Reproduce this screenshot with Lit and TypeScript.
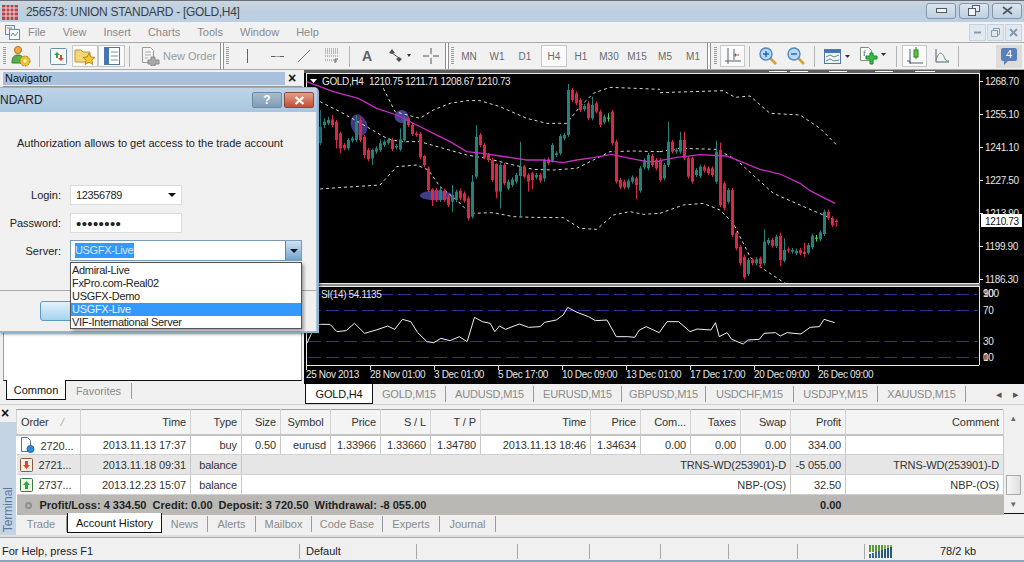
import { LitElement, css, html, svg } from 'lit';
import { customElement } from 'lit/decorators.js';

type Pt = [number, number];
// o, c, high, low - y values sampled from the 3x crop of the chart
type Candle = [number, number, number?, number?];

const sx = (list: Pt[], ox: number) => list.map(([x, y]) => `${ox + x / 3},${70 + y / 3}`).join(' ');

const candles: Candle[] = [
	[220, 170, 120], [165, 155, 145, 175], [160, 150, 140], [148, 165, 135], [155, 210, 150, 235], [190, 235, 185, 250],
	[225, 235], [235, 210, 205], [212, 205], [210, 155, 135], [150, 210, 140], [200, 255, 195, 265],
	[240, 268], [265, 240, 235, 285], [245, 235], [240, 220, 208], [225, 215], [218, 210],
	[210, 238], [232, 228], [238, 208, 175], [210, 150, 140], [145, 165], [165, 192],
	[190, 195], [192, 262], [258, 285, 255, 292], [295, 360], [358, 390, 355, 408], [360, 390],
	[390, 360], [362, 390], [380, 405], [395, 375, 345, 425], [390, 365], [362, 385],
	[370, 392], [385, 445], [440, 335, 315], [320, 200, 165], [195, 225], [225, 262],
	[255, 270], [270, 330], [282, 365, 280, 385], [365, 285, 280, 415], [285, 340], [355, 335],
	[345, 328], [335, 315], [318, 290, 215, 440], [290, 320], [315, 335, 310, 365], [310, 330, 305, 358],
	[322, 315], [315, 332], [325, 270, 265, 335], [268, 280], [272, 225], [255, 250],
	[250, 198], [205, 195], [195, 60, 42], [60, 90], [70, 100], [90, 120],
	[118, 108], [100, 145], [145, 105, 80], [100, 125], [125, 165], [157, 140],
	[145, 143, 130, 155], [125, 220, 120], [215, 335], [330, 352], [335, 352], [352, 332],
	[335, 322], [325, 345, 320, 388], [362, 295], [292, 270], [295, 255], [258, 285],
	[270, 295], [270, 330], [325, 285], [285, 215, 155], [215, 245], [245, 240],
	[245, 210, 185], [210, 265, 185], [265, 320], [265, 335], [315, 300], [318, 290],
	[290, 302], [295, 310], [295, 315], [335, 245, 212], [240, 405, 218], [340, 415],
	[395, 360], [360, 495], [490, 535], [530, 580], [560, 622], [612, 570],
	[570, 580], [580, 568], [565, 582, 560, 595], [580, 515, 478], [520, 510], [510, 527],
	[528, 500], [498, 570, 488, 588], [572, 540, 505], [538, 542], [545, 540], [550, 542],
	[540, 550], [545, 552, 518, 562], [548, 525], [532, 497], [506, 503, 495, 515], [508, 487],
	[492, 425], [425, 445], [445, 465], [452, 456, 448, 470],
];
const smallGreen = new Set([72, 124]);

const maLeft: Pt[] = [[20, 35], [100, 65], [175, 85], [230, 115], [290, 135], [320, 150], [400, 190], [450, 215], [500, 245], [550, 250], [600, 258], [680, 270], [730, 270], [790, 278], [830, 270], [880, 263], [935, 253], [990, 265], [1040, 275], [1080, 274]];
const maRight: Pt[] = [[0, 272], [50, 262], [120, 254], [200, 258], [300, 298], [360, 312], [420, 340], [450, 362], [525, 400]];
const bands: [Pt[], number][] = [
	[[[250, 55], [285, 125], [360, 145], [400, 120], [450, 100], [500, 92], [540, 92], [600, 110], [680, 145], [740, 160], [800, 160], [840, 110], [880, 70], [930, 52], [1080, 58]], 300],
	[[[60, 95], [120, 125], [200, 170], [260, 205], [300, 215], [360, 215], [430, 235], [500, 255], [560, 265], [640, 285], [700, 298], [760, 300], [830, 295], [880, 270], [930, 245], [1000, 243], [1080, 245]], 300],
	[[[60, 357], [130, 352], [240, 345], [290, 290], [350, 285], [385, 300], [420, 350], [470, 390], [510, 430], [580, 428], [640, 440], [700, 442], [790, 443], [840, 475], [890, 478], [940, 435], [990, 425], [1030, 433], [1080, 430]], 300],
	[[[0, 68], [190, 62], [225, 82], [270, 78], [330, 130], [420, 135], [480, 175], [530, 225]], 660],
	[[[0, 245], [60, 235], [170, 238], [230, 270], [290, 325], [340, 370], [420, 405], [490, 435], [525, 450]], 660],
	[[[0, 430], [70, 405], [130, 400], [180, 420], [220, 460], [270, 560], [300, 590], [375, 640]], 660],
];
const rsi: Pt[] = [[15, 190], [25, 160], [40, 133], [65, 133], [80, 155], [100, 152], [118, 130], [140, 160], [165, 150], [190, 138], [205, 148], [222, 118], [240, 125], [255, 158], [275, 185], [290, 188], [305, 175], [325, 182], [345, 170], [362, 185], [378, 112], [395, 125], [412, 130], [422, 155], [432, 138], [445, 148], [475, 132], [495, 142], [520, 140], [530, 127], [555, 120], [570, 105], [580, 82], [600, 97], [625, 110], [640, 122], [665, 120], [685, 170], [710, 170], [725, 172], [735, 150], [750, 140], [778, 158], [795, 125], [820, 125], [845, 155], [860, 147], [890, 150], [900, 128], [908, 170], [925, 158], [935, 178], [960, 192], [970, 180], [995, 178], [1005, 160], [1030, 158], [1040, 168], [1055, 158], [1085, 162], [1105, 142], [1125, 140], [1135, 118], [1158, 128]];

const priceLabels: [string, number][] = [['1268.70', 81], ['1255.10', 114], ['1241.10', 147], ['1227.50', 180], ['1213.90', 213], ['1199.90', 246], ['1186.30', 279]];
const dateLabels = ['25 Nov 2013', '28 Nov 01:00', '3 Dec 01:00', '5 Dec 17:00', '10 Dec 09:00', '13 Dec 01:00', '17 Dec 17:00', '20 Dec 09:00', '26 Dec 09:00'];

const icons = {
	logo: html`<svg width="16" height="15" viewBox="0 0 16 15"><rect width="16" height="15" fill="#b8434a"/><path d="M0 3h16M0 7h16M0 11h16M4 0v15M8 0v15M12 0v15" stroke="#e8d8d8" stroke-width="1"/></svg>`,
	menu: html`<svg width="15" height="15" viewBox="0 0 15 15"><rect x="0.5" y="0.5" width="9" height="9" fill="#e8f2fa" stroke="#5f8fb8"/><rect x="4.5" y="4.5" width="10" height="10" fill="#fff" stroke="#5f8fb8"/><path d="M6 11l2-3 2 3 3-4" fill="none" stroke="#4f9f8f"/><path d="M2 3h5" stroke="#5f8fb8"/></svg>`,
	people: html`<svg width="20" height="22" viewBox="0 0 20 22"><circle cx="7" cy="5" r="3.6" fill="#f0a848" stroke="#b87820"/><path d="M1 18c0-6 2-8 6-8s6 2 6 8z" fill="#58b048" stroke="#2f7f2f"/><circle cx="14" cy="16" r="5" fill="#e8c030" stroke="#a88010" stroke-dasharray="2 1"/><circle cx="14" cy="16" r="1.8" fill="#fff4c0"/></svg>`,
	market: html`<svg width="17" height="17" viewBox="0 0 17 17"><rect x="0.5" y="0.5" width="16" height="16" rx="1" fill="#f4f8fb" stroke="#6f8fa8"/><path d="M7 4l-3 3h2v3h2V7h2z" fill="#3aa03a"/><path d="M10 13l3-3h-2V7H9v3H7z" fill="#d84a2a" transform="translate(1 0)"/></svg>`,
	folder: html`<svg width="22" height="20" viewBox="0 0 22 20"><path d="M1 4h6l2 2h7v10H1z" fill="#f4d878" stroke="#b89838"/><path d="M15 7l1.8 4 4.2.4-3.2 2.8 1 4.2-3.8-2.2-3.8 2.2 1-4.2L9 11.4l4.2-.4z" fill="#f4c838" stroke="#b88818"/></svg>`,
	nav: html`<svg width="16" height="18" viewBox="0 0 16 18"><rect x="0.5" y="0.5" width="15" height="17" fill="#fff" stroke="#4f78a8"/><rect x="1" y="1" width="4" height="16" fill="#3f78b8"/><path d="M7 5h7M7 9h7M7 13h7" stroke="#7f8f9f"/></svg>`,
	order: html`<svg width="20" height="20" viewBox="0 0 20 20"><path d="M2.5 1.5h8l3 3v12h-11z" fill="#f4f4f4" stroke="#9a9a9a"/><path d="M5 6h6M5 9h6M5 12h3" stroke="#a8a8a8"/><path d="M11 11h4v3h4v4h-4v2h-4v-2H8v-4h3z" fill="#a8a8a8" stroke="#8a8a8a"/></svg>`,
	vline: html`<svg width="3" height="14" viewBox="0 0 3 14"><path d="M1.5 0v14" stroke="#606060"/></svg>`,
	hline: html`<svg width="13" height="3" viewBox="0 0 13 3"><path d="M0 1.5h4M9 1.5h4" stroke="#606060"/><path d="M4 1.5h5" stroke="#a0a0a0"/></svg>`,
	trend: html`<svg width="14" height="14" viewBox="0 0 14 14"><path d="M1 13L13 1" stroke="#707070"/></svg>`,
	fibo: html`<svg width="15" height="16" viewBox="0 0 15 16"><path d="M1 1h13M1 3h13M1 5h13M1 8h13M1 12h9" stroke="#808080" stroke-dasharray="1 1"/><path d="M11 15v-4h3M11 13h2" stroke="#606060" fill="none"/></svg>`,
	arrows: html`<svg width="24" height="14" viewBox="0 0 24 14"><path d="M5 0l3 4-3 1-3-1zM12 8l3 2-3 3-3-3z" fill="#505050"/><path d="M5 4l7 5" stroke="#505050"/><path d="M20 5h4l-2 3z" fill="#303030"/></svg>`,
	cross: html`<svg width="16" height="16" viewBox="0 0 16 16"><path d="M8 0v6M8 10v6M0 8h6M10 8h6" stroke="#555"/></svg>`,
	chart: html`<svg width="16" height="16" viewBox="0 0 16 16"><path d="M3 0v13h13M0 13h3M3 13v3M9 1v11" stroke="#506070" fill="none"/><path d="M11 5l-2 2 2 2z" fill="#c84030"/><path d="M10 7h4" stroke="#c84030"/></svg>`,
	zoomIn: html`<svg width="18" height="18" viewBox="0 0 18 18"><path d="M10 10l7 7" stroke="#d8a030" stroke-width="2.5"/><circle cx="7" cy="7" r="6" fill="#b8d8f4" stroke="#4f88c0" stroke-width="1.4"/><path d="M4 7h6M7 4v6" stroke="#2860b0" stroke-width="1.4"/></svg>`,
	zoomOut: html`<svg width="18" height="18" viewBox="0 0 18 18"><path d="M10 10l7 7" stroke="#d8a030" stroke-width="2.5"/><circle cx="7" cy="7" r="6" fill="#b8d8f4" stroke="#4f88c0" stroke-width="1.4"/><path d="M4 7h6" stroke="#2860b0" stroke-width="1.4"/></svg>`,
	template: html`<svg width="26" height="15" viewBox="0 0 26 15"><rect x="0.5" y="0.5" width="16" height="14" fill="#f0f6fb" stroke="#4f78a8"/><rect x="1" y="1" width="15" height="3" fill="#3f78b8"/><path d="M2 8l4-2 4 2 5-2M2 12l4-2 4 2 5-1" stroke="#5f9080" fill="none"/><path d="M21 6h5l-2.500 3z" fill="#303030"/></svg>`,
	add: html`<svg width="26" height="18" viewBox="0 0 26 18"><path d="M0.500 0.500h8l3 3v10h-11z" fill="#fbfbf4" stroke="#7f8f7f"/><text x="3" y="9" font-size="8" font-family="Liberation Serif, serif" fill="#404040">f</text><path d="M8 8h4v-3h3v3h4v3h-4v5h-3v-5H8z" fill="#38c048" stroke="#188828" transform="translate(-2 1)"/><path d="M21 6h5l-2.500 3z" fill="#303030"/></svg>`,
	candle: html`<svg width="16" height="18" viewBox="0 0 16 18"><path d="M3 2v14h13M0 14h3M3 14v3" stroke="#506070" fill="none"/><path d="M9 0v12" stroke="#2f7f2f"/><rect x="7" y="3" width="4" height="7" fill="#58c838" stroke="#2f7f2f"/></svg>`,
	indicator: html`<svg width="14" height="14" viewBox="0 0 14 14"><path d="M1 0v13h13" stroke="#506070" fill="none"/><path d="M1 11c3-9 6-9 9-1 1 2 2 2 4 2" stroke="#5f9060" fill="none"/></svg>`,
	docBall: html`<svg width="15" height="16" viewBox="0 0 15 16"><path d="M1.500 0.500h6l3 3v11h-9z" fill="#fff" stroke="#607080"/><circle cx="10.500" cy="12" r="3.500" fill="#2f88d8" stroke="#1f68a8"/></svg>`,
	down: html`<svg width="13" height="14" viewBox="0 0 13 14"><rect x="0.500" y="0.500" width="12" height="13" rx="1" fill="#f6f0e4" stroke="#8a5a3a"/><path d="M5 3h3v4h2l-3.500 4L3 7h2z" fill="#e04818"/></svg>`,
	up: html`<svg width="13" height="14" viewBox="0 0 13 14"><rect x="0.500" y="0.500" width="12" height="13" rx="1" fill="#eef6ea" stroke="#3a7a3a"/><path d="M5 11h3V7h2L6.500 3 3 7h2z" fill="#28a838"/></svg>`,
};

function chartSvg() {
	return html`<svg class="chart-svg" width="720" height="314" viewBox="304 70 720 314">
		${svg`
		<rect x="304" y="70" width="676" height="3" fill="#5c5c5c"/>
		<rect x="306" y="283" width="674" height="3" fill="#8c8c8c"/>
		<path d="M306 73.500h673M306.500 73v210M306 283.500h673M979.500 73v210" stroke="#e8e8e8" fill="none"/>
		<path d="M769 71.500h18M790 71.500h18M829 71.500h18M875 71.500h18M915 71.500h20" stroke="#fff"/>
		<ellipse cx="359" cy="125" rx="8" ry="11" fill="#5a50b8" fill-opacity="0.7" transform="rotate(-22 359 125)"/>
		<ellipse cx="401.500" cy="116.500" rx="7" ry="6.500" fill="#5a50b8" fill-opacity="0.8"/>
		<ellipse cx="436" cy="195.500" rx="16" ry="5" fill="#5a50b8" fill-opacity="0.75"/>
		${bands.map(([pts, ox]) => svg`<polyline points=${sx(pts, ox)} fill="none" stroke="#d8d8d8" stroke-width="1" stroke-dasharray="3 3"/>`)}
		${candles.map(([o, c, h, l], i) => {
			const x = 320 + 4 * i;
			const top = 70 + Math.min(o, c) / 3;
			const bottom = 70 + Math.max(o, c) / 3;
			const hi = h !== undefined ? 70 + h / 3 : top - 2;
			const lo = l !== undefined ? 70 + l / 3 : bottom + 2;
			const color = smallGreen.has(i) ? '#46d850' : c < o ? '#23837c' : '#d9274a';
			return svg`<path d="M${x + 0.5} ${hi}V${lo}" stroke=${color}/><rect x=${x - 1} y=${top} width="3" height=${Math.max(bottom - top, 1)} fill=${color}/>`;
		})}
		<polyline points=${sx(maLeft, 300)} fill="none" stroke="#c92bc0" stroke-width="1.300"/>
		<polyline points=${sx(maRight, 660)} fill="none" stroke="#c92bc0" stroke-width="1.300"/>
		<path d="M310 79h7l-3.500 4z" fill="#fff"/>
		<text class="ct" x="322" y="85">GOLD,H4</text>
		<text class="ct" x="369" y="85">1210.75 1211.71 1208.67 1210.73</text>
		${priceLabels.map(([t, y]) => svg`<path d="M980 ${y + 0.500}h3" stroke="#e8e8e8"/><text class="ct" x="985" y=${y + 4}>${t}</text>`)}
		<rect x="981" y="214" width="41" height="13" fill="#fff"/>
		<text class="ct dark" x="985" y="225">1210.73</text>

		<path d="M306 286.500h673M306.500 286v79M306 365.500h673M979.500 286v79" stroke="#e8e8e8" fill="none"/>
		${[294, 310, 341, 357].map((y) => svg`<path d="M308 ${y + 0.500}H978" stroke="#30309a" stroke-dasharray="13 5"/>`)}
		<polyline points=${rsi.map(([x, y]) => `${300 + x / 2.166},${280 + y / 3}`).join(' ')} fill="none" stroke="#f0f0f0"/>
		<text class="ct" x="321" y="298">SI(14) 54.1135</text>
		<text class="ct" x="983" y="297">100</text>
		<text class="ct" x="983" y="297">90</text>
		<text class="ct" x="983" y="314">70</text>
		<text class="ct" x="983" y="345">30</text>
		<text class="ct" x="983" y="361">10</text>
		<text class="ct" x="983" y="361">0</text>
		${dateLabels.map((t, i) => svg`<path d="M${306.5 + 64 * i} 365v5" stroke="#e8e8e8"/><text class="ct" x=${306 + 64 * i} y="378">${t}</text>`)}
		`}
	</svg>`;
}

@customElement('app-root')
export class AppRoot extends LitElement {
	tool(w: number, content: unknown, cls = '') {
		return html`<div class="tool ${cls}" style="width:${w}px">${content}</div>`;
	}

	sep(w = 9) {
		return html`<div class="tool" style="width:${w}px"><span class="sep"></span></div>`;
	}

	grip(w = 7) {
		return html`<div class="tool" style="width:${w}px"><span class="grip"></span></div>`;
	}

	bar() {
		return html`<span class="bar"></span>`;
	}

	toolbar() {
		const frames = ['MN', 'W1', 'D1'];
		const frames2 = ['H1', 'M30', 'M15', 'M5', 'M1'];
		return html`<div class="toolbar">
			${this.grip(8)}${this.tool(26, icons.people)}${this.sep(10)}
			${this.tool(28, icons.market)}${this.tool(26, icons.folder, 'on')}${this.tool(27, icons.nav, 'on')}${this.sep(9)}
			<div class="tool new-order" style="width:86px">${icons.order}<span>New Order</span></div>
			${this.bar()}${this.grip(6)}
			${this.tool(34, icons.vline)}${this.tool(26, icons.hline)}${this.tool(28, icons.trend)}${this.tool(27, icons.fibo)}${this.sep(8)}
			${this.tool(28, html`<b class="a">A</b>`)}${this.tool(36, icons.arrows)}${this.tool(28, icons.cross)}
			${this.bar()}${this.grip(6)}
			${frames.map((f) => this.tool(28, f, 'tf'))}
			<span class="gap2"></span>${this.tool(26, 'H4', 'tf on')}
			${frames2.map((f) => this.tool(28, f, 'tf'))}
			${this.bar()}${this.grip(9)}
			${this.tool(25, icons.chart, 'on')}${this.sep(9)}
			${this.tool(28, icons.zoomIn)}${this.tool(28, icons.zoomOut)}${this.sep(8)}
			${this.tool(38, icons.template)}${this.tool(34, icons.add)}${this.sep(12)}
			${this.tool(25, icons.candle, 'on')}${this.tool(30, icons.indicator)}${this.sep(2)}
			<div class="grow"></div>
			<div class="notify"><span class="bubble">4</span></div>
		</div>`;
	}

	dialog() {
		const servers = ['Admiral-Live', 'FxPro.com-Real02', 'USGFX-Demo', 'USGFX-Live', 'VIF-International Server'];
		return html`<div class="dialog">
			<div class="dlg-title">
				<span>NDARD</span>
				<div class="grow"></div>
				<span class="cap help">?</span>
				<span class="cap close"><svg width="11" height="9" viewBox="0 0 11 9"><path d="M1.500 1l8 7M9.500 1l-8 7" stroke="#fff" stroke-width="2.200"/></svg></span>
			</div>
			<div class="dlg-body">
				<p class="dlg-msg">Authorization allows to get access to the trade account</p>
				<div class="field first">
					<label>Login:</label>
					<div class="input login">12356789<svg width="8" height="4" viewBox="0 0 8 4"><path d="M0 0h8L4 4z" fill="#111"/></svg></div>
				</div>
				<div class="field">
					<label>Password:</label>
					<div class="input login dots">••••••••</div>
				</div>
				<div class="field last">
					<label>Server:</label>
					<div class="input server"><span class="picked">USGFX-Live</span><span class="drop"><svg width="8" height="4" viewBox="0 0 8 4"><path d="M0 0h8L4 4z" fill="#111"/></svg></span></div>
				</div>
				<div class="dlg-foot"><span class="ok"></span></div>
			</div>
			<ul class="server-list">
				${servers.map((s) => html`<li class=${s === 'USGFX-Live' ? 'sel' : ''}>${s}</li>`)}
			</ul>
		</div>`;
	}

	table() {
		const heads = ['Order', 'Time', 'Type', 'Size', 'Symbol', 'Price', 'S / L', 'T / P', 'Time', 'Price', 'Com...', 'Taxes', 'Swap', 'Profit', 'Comment'];
		const widths = [64, 110, 51, 39, 50, 50, 50, 50, 110, 50, 50, 50, 50, 55, 158];
		const trade = ['2013.11.13 17:37', 'buy', '0.50', 'eurusd', '1.33966', '1.33660', '1.34780', '2013.11.13 18:46', '1.34634', '0.00', '0.00', '0.00', '334.00', ''];
		return html`<table>
			<colgroup>${widths.map((w) => html`<col style="width:${w}px" />`)}</colgroup>
			<thead><tr>${heads.map((h, i) => html`<th class=${i === 0 ? 'left' : i === 4 ? 'mid' : ''}>${h}${i === 0 ? html`<i class="sort">/</i>` : ''}</th>`)}</tr></thead>
			<tbody>
				<tr><td class="order">${icons.docBall}<span>2720...</span></td>${trade.map((t) => html`<td>${t}</td>`)}</tr>
				<tr class="alt"><td class="order">${icons.down}<span>2721...</span></td><td>2013.11.18 09:31</td><td>balance</td><td colspan="10">TRNS-WD(253901)-D</td><td>-5 055.00</td><td>TRNS-WD(253901)-D</td></tr>
				<tr><td class="order">${icons.up}<span>2737...</span></td><td>2013.12.23 15:07</td><td>balance</td><td colspan="10">NBP-(OS)</td><td>32.50</td><td>NBP-(OS)</td></tr>
				<tr class="total"><td colspan="13"><i class="dot"></i>Profit/Loss: 4 334.50&nbsp; Credit: 0.00&nbsp; Deposit: 3 720.50&nbsp; Withdrawal: -8 055.00</td><td>0.00</td><td></td></tr>
			</tbody>
		</table>`;
	}

	render() {
		const chartTabs: [string, number][] = [['GOLD,M15', 73], ['AUDUSD,M15', 88], ['EURUSD,M15', 88], ['GBPUSD,M15', 84], ['USDCHF,M15', 88], ['USDJPY,M15', 84], ['XAUUSD,M15', 88]];
		const termTabs: [string, number][] = [['News', 46], ['Alerts', 48], ['Mailbox', 56], ['Code Base', 71], ['Experts', 57], ['Journal', 56]];
		return html`
			<header class="title">
				${icons.logo}
				<span class="title-text">256573: UNION STANDARD - [GOLD,H4]</span>
				<div class="grow"></div>
				<span class="win"><svg width="11" height="5" viewBox="0 0 11 5"><rect x="0.500" y="0.500" width="10" height="4" fill="#f4f4f4" stroke="#505a66"/></svg></span>
				<span class="win"><svg width="12" height="11" viewBox="0 0 12 11"><rect x="4.500" y="0.500" width="7" height="6" fill="#e8eef4" stroke="#505a66"/><rect x="0.500" y="3.500" width="7" height="7" fill="#f4f4f4" stroke="#505a66"/></svg></span>
				<span class="win"><svg width="11" height="9" viewBox="0 0 11 9"><path d="M1 1l9 7M10 1l-9 7" stroke="#505a66" stroke-width="1.800"/></svg></span>
			</header>
			<nav class="menu">
				${icons.menu}
				<div class="menu-items">${['File', 'View', 'Insert', 'Charts', 'Tools', 'Window', 'Help'].map((m) => html`<span>${m}</span>`)}</div>
				<div class="grow"></div>
				<span class="mdi"><svg width="7" height="3" viewBox="0 0 7 3"><path d="M0 1.500h7" stroke="#8a9aa8" stroke-width="2"/></svg></span>
				<span class="mdi"><svg width="9" height="9" viewBox="0 0 9 9"><path d="M2.500 2.500v-2h6v6h-2M0.500 2.500h6v6h-6z" fill="none" stroke="#8a9aa8"/></svg></span>
				<span class="mdi"><svg width="9" height="9" viewBox="0 0 9 9"><path d="M1 1l7 7M8 1l-7 7" stroke="#8a9aa8" stroke-width="2"/></svg></span>
			</nav>
			${this.toolbar()}
			<main class="main">
				<aside class="navigator">
					<div class="nav-head"><span class="nav-title">Navigator</span><span class="x">×</span></div>
					<div class="nav-panel"></div>
					<div class="tabs nav-tabs">
						<span class="tab on" style="width:60px">Common</span>
						<span class="tab" style="width:66px">Favorites</span>
					</div>
				</aside>
				<section class="chart">
					${chartSvg()}
					<div class="tabs chart-tabs">
						<span class="tab on" style="width:68px">GOLD,H4</span>
						${chartTabs.map(([t, w]) => html`<span class="tab" style="width:${w}px">${t}</span>`)}
						<div class="grow"></div>
						<span class="arrow">◂</span><span class="arrow">▸</span>
					</div>
				</section>
				${this.dialog()}
			</main>
			<section class="terminal">
				<div class="strip"><span class="x">×</span><div class="strip-label"><span>Terminal</span></div></div>
				<div class="term-main">
					<div class="grid-wrap">
						${this.table()}
						<div class="scroll"><span class="sc">▴</span><span class="thumb"></span><span class="sc low">▾</span></div>
					</div>
					<div class="tabs term-tabs">
						<span class="tab" style="width:51px">Trade</span>
						<span class="tab on" style="width:95px">Account History</span>
						${termTabs.map(([t, w]) => html`<span class="tab" style="width:${w}px">${t}</span>`)}
					</div>
				</div>
			</section>
			<footer class="status">
				${([['For Help, press F1', 298], ['Default', 117], ['', 101], ['', 72], ['', 71], ['', 68], ['', 69], ['', 67]] as [string, number][]).map(([t, w]) => html`<span class="cell" style="width:${w}px">${t}</span>`)}
				<svg class="conn" width="24" height="13" viewBox="0 0 24 13">
					${[0, 3, 6, 9, 12, 15, 18, 21].map((x, i) => svg`<rect x=${x} y="0" width="2" height="7" fill=${i < 5 ? '#5a9a3a' : '#88a858'}/><rect x=${x} y=${9 - i} width="2" height=${4 + i} fill=${i < 4 ? '#3f6a90' : '#2f5878'}/>`)}
				</svg>
				<span class="kb">78/2 kb</span>
			</footer>
		`;
	}

	static styles = css`
		:host {
			display: flex;
			flex-direction: column;
			position: relative;
			width: 1024px;
			height: 562px;
			overflow: hidden;
			background: #f0f0f0;
			font: 11px 'Liberation Sans', Arial, sans-serif;
			color: #222;
		}

		* {
			box-sizing: border-box;
		}

		.grow {
			flex: 1;
		}

		.title {
			display: flex;
			align-items: center;
			flex: 0 0 22px;
			padding: 1px 2px 0 2px;
			border-top: 1px solid #6a6f76;
			background: linear-gradient(#cbd6e0, #bccedf 50%, #bdd0e2);
		}

		.title-text {
			margin-left: 8px;
			font-size: 12px;
			letter-spacing: -0.300px;
			color: #3a3f46;
		}

		.win {
			display: flex;
			align-items: center;
			justify-content: center;
			width: 30px;
			height: 16px;
			margin-left: 3px;
			margin-top: -3px;
			border: 1px solid #8296aa;
			border-radius: 3px;
			background: linear-gradient(#dbe5ee, #bfd0e0);
		}

		.menu {
			display: flex;
			align-items: center;
			flex: 0 0 20px;
			padding: 0 2px 0 5px;
			background: #f1f1f1;
			color: #8a8a8a;
			font-size: 11px;
		}

		.menu-items {
			display: flex;
			gap: 17px;
			margin-left: 8px;
		}

		.mdi {
			display: flex;
			align-items: center;
			justify-content: center;
			width: 17px;
			height: 17px;
			margin-left: 1px;
			border: 1px solid #c4d2de;
			background: #dfe9f2;
		}

		.toolbar {
			display: flex;
			align-items: center;
			flex: 0 0 28px;
			border-top: 1px solid #a8a8a8;
			border-bottom: 1px solid #a8a8a8;
			background: #f1f1f1;
		}

		.tool {
			display: flex;
			align-items: center;
			justify-content: center;
			flex: none;
			height: 22px;
		}

		.tool.on {
			border: 1px solid #c8c8c8;
			background: #fafafa;
		}

		.tf {
			color: #6a6a6a;
			font-size: 10px;
		}

		.gap2 {
			width: 2px;
		}

		.new-order {
			justify-content: flex-start;
			gap: 3px;
			padding-left: 6px;
			color: #9a9a9a;
			font-size: 11px;
			white-space: nowrap;
		}

		.a {
			font-size: 14px;
			color: #606060;
			font-weight: bold;
		}

		.sep {
			width: 1px;
			height: 21px;
			background: #b4b4b4;
		}

		.bar {
			flex: none;
			width: 4px;
			height: 26px;
			border-left: 1px solid #8f8f8f;
			border-right: 1px solid #8f8f8f;
			background: #fff;
		}

		.grip {
			width: 3px;
			height: 18px;
			background: repeating-linear-gradient(#9a9a9a 0 1px, transparent 1px 2px);
		}

		.notify {
			display: flex;
			align-items: center;
			justify-content: center;
			width: 26px;
			height: 23px;
			margin-right: 2px;
			background: #dcdcdc;
		}

		.bubble {
			position: relative;
			width: 16px;
			height: 13px;
			margin-top: -3px;
			border-radius: 2px;
			background: #5a7fb8;
			color: #fff;
			font-size: 11px;
			line-height: 13px;
			text-align: center;
		}

		.bubble::after {
			content: '';
			position: absolute;
			left: 3px;
			bottom: -4px;
			border-top: 4px solid #5a7fb8;
			border-right: 4px solid transparent;
		}

		.main {
			display: flex;
			flex: 0 0 335px;
			position: relative;
			border-bottom: 1px solid #d0d0d0;
		}

		.navigator {
			display: flex;
			flex-direction: column;
			flex: 0 0 304px;
			padding: 2px 2px 4px 3px;
		}

		.nav-head {
			display: flex;
			align-items: center;
			flex: 0 0 13px;
		}

		.nav-title {
			flex: 0 0 282px;
			padding-left: 2px;
			line-height: 13px;
			background: #a9c1dc;
			color: #111;
		}

		.x {
			margin-left: 3px;
			font-size: 14px;
			font-weight: bold;
			line-height: 13px;
			color: #111;
		}

		.nav-panel {
			flex: 1;
			margin-top: 1px;
			border: 1px solid #a0a0a0;
			border-bottom: 1px solid #111;
			background: #fff;
		}

		.tabs {
			display: flex;
			flex: none;
			height: 20px;
		}

		.tab {
			display: flex;
			align-items: center;
			justify-content: center;
			flex: none;
			height: 16px;
			margin-top: 2px;
			border-right: 1px solid #9a9a9a;
			color: #8a8a8a;
		}

		.tab.on {
			height: 20px;
			margin-top: -1px;
			border: 1px solid #111;
			border-top: 0;
			background: #fff;
			color: #111;
		}

		.nav-tabs {
			padding-left: 3px;
			height: 19px;
		}

		.chart {
			display: flex;
			flex-direction: column;
			flex: 1;
		}

		.chart-svg {
			display: block;
			flex: none;
			background: #000;
		}

		.ct {
			font: 10px 'Liberation Sans', Arial, sans-serif;
			letter-spacing: -0.350px;
			fill: #e6e6e6;
		}

		.ct.dark {
			fill: #111;
		}

		.chart-tabs {
			padding-left: 1px;
			letter-spacing: -0.200px;
		}

		.chart-tabs .tab.on {
			margin-top: 0;
		}

		.arrow {
			width: 17px;
			line-height: 20px;
			color: #555;
			text-align: center;
		}

		.dialog {
			position: absolute;
			left: 0;
			top: 17px;
			width: 319px;
			height: 246px;
			border: 2px solid #8fb4cc;
			border-top-width: 1px;
			border-left: 0;
			border-radius: 0 5px 0 0;
			background: #a8c6de;
			box-shadow: 1px 1px 3px rgba(0, 0, 0, 0.5);
		}

		.dlg-title {
			display: flex;
			align-items: flex-start;
			height: 24px;
			padding: 4px 3px 0 0;
			background: linear-gradient(#bed4e8, #a8c6df);
			font-size: 12px;
			color: #222;
		}

		.dlg-title > span:first-child {
			margin-top: 1px;
		}

		.cap {
			display: flex;
			align-items: center;
			justify-content: center;
			height: 16px;
			border: 1px solid #6a8aa6;
			border-radius: 2px;
		}

		.help {
			width: 30px;
			margin-right: 2px;
			background: linear-gradient(#a9bccc, #7f9db6);
			color: #fff;
			font-weight: bold;
		}

		.close {
			width: 30px;
			border-color: #8a4a3a;
			background: linear-gradient(#e2a08c, #c24f36);
		}

		.dlg-body {
			position: relative;
			height: 219px;
			margin-right: 1px;
			background: #f0f0f0;
			font-size: 11px;
		}

		.dlg-msg {
			margin: 0;
			padding: 24px 0 0 17px;
			line-height: 14px;
		}

		.field {
			display: flex;
			align-items: center;
			margin-top: 8px;
		}

		.field.first {
			margin-top: 35px;
		}

		.field.last {
			margin-top: 7px;
		}

		.field label {
			flex: 0 0 61px;
			text-align: right;
		}

		.input {
			display: flex;
			align-items: center;
			justify-content: space-between;
			margin-left: 9px;
			background: #fff;
			border: 1px solid #dcdcdc;
			font-size: 11px;
			letter-spacing: -0.350px;
		}

		.login {
			width: 112px;
			height: 20px;
			padding: 0 5px;
		}

		.dots {
			font-size: 15px;
			letter-spacing: 0.400px;
		}

		.server {
			width: 232px;
			height: 21px;
			padding-left: 4px;
			border-color: #7a9ab8;
		}

		.picked {
			background: #3399ff;
			color: #dce8f4;
			line-height: 15px;
			padding-right: 1px;
		}

		.drop {
			display: flex;
			align-items: center;
			justify-content: center;
			width: 16px;
			height: 19px;
			background: linear-gradient(#cfe4f4, #6fa4cc);
			border-left: 1px solid #5f88aa;
		}

		.dlg-foot {
			position: absolute;
			left: 0;
			right: 0;
			top: 178px;
			bottom: 0;
			border-top: 1px solid #a8a8a8;
		}

		.ok {
			position: absolute;
			left: 40px;
			top: 10px;
			width: 70px;
			height: 20px;
			border: 1px solid #5a9ac4;
			border-radius: 3px;
			background: linear-gradient(#e4f2fb, #a6d2ee);
		}

		.server-list {
			position: absolute;
			left: 70px;
			top: 174px;
			width: 232px;
			height: 67px;
			margin: 0;
			padding: 1px 0 0;
			list-style: none;
			background: #fff;
			border: 1px solid #555;
			box-shadow: 2px 2px 3px rgba(0, 0, 0, 0.35);
			font-size: 11px;
			letter-spacing: -0.300px;
		}

		.server-list li {
			height: 13px;
			line-height: 13px;
			padding-left: 1px;
		}

		.server-list .sel {
			background: #3399ff;
			color: #eaf2fa;
		}

		.terminal {
			display: flex;
			flex: 0 0 132px;
			border-bottom: 2px solid #e0e0e0;
		}

		.strip {
			display: flex;
			flex-direction: column;
			flex: 0 0 16px;
			padding-top: 2px;
		}

		.strip .x {
			margin: 0 0 0 1px;
			height: 15px;
		}

		.strip-label {
			display: flex;
			flex: 1;
			align-items: flex-end;
			justify-content: center;
			padding-bottom: 3px;
			background: #c4d4e4;
			color: #5a7a9c;
			font-size: 12px;
		}

		.strip-label span {
			writing-mode: vertical-rl;
			transform: rotate(180deg);
		}

		.term-main {
			display: flex;
			flex-direction: column;
			flex: 1;
			padding-top: 4px;
		}

		.grid-wrap {
			display: flex;
			height: 105px;
			border-bottom: 1px solid #111;
		}

		table {
			width: 987px;
			border-collapse: collapse;
			table-layout: fixed;
			background: #fff;
			font-size: 11px;
			letter-spacing: -0.100px;
			color: #333;
		}

		th {
			height: 25px;
			padding: 0 4px;
			border: 1px solid #d4d4d4;
			border-top: 1px solid #a0a0a0;
			border-bottom: 2px solid #c4c4c4;
			background: #f4f4f4;
			font-weight: normal;
			text-align: right;
			white-space: nowrap;
			overflow: hidden;
		}

		th.left {
			text-align: left;
		}

		th.mid {
			text-align: center;
		}

		.sort {
			margin-left: 12px;
			color: #aaa;
		}

		td {
			height: 20px;
			padding: 0 4px 0 3px;
			border-right: 1px solid #c8c8c8;
			border-bottom: 1px solid #d0d0d0;
			text-align: right;
			white-space: nowrap;
			overflow: hidden;
		}

		td.order {
			text-align: left;
		}

		.order svg {
			vertical-align: -3px;
			margin-right: 6px;
		}

		.alt td {
			background: #e6e6e6;
		}

		.total td {
			border: 0;
			background: #b9b8b4;
			font-weight: bold;
			color: #222;
			text-align: left;
			letter-spacing: 0;
		}

		.total td:nth-child(2) {
			text-align: right;
		}

		.dot {
			display: inline-block;
			width: 7px;
			height: 7px;
			margin: 0 8px 0 5px;
			border: 2px solid #8f8f8f;
			border-radius: 50%;
		}

		.scroll {
			display: flex;
			flex-direction: column;
			align-items: center;
			flex: 0 0 19px;
			font-size: 9px;
			color: #666;
			background: #f0f0f0;
		}

		.thumb {
			width: 15px;
			height: 21px;
			margin-top: 48px;
			border: 1px solid #aaa;
			background: linear-gradient(90deg, #f6f6f6, #e0e0e0);
		}

		.sc {
			line-height: 18px;
		}

		.sc.low {
			margin-top: auto;
		}

		.term-tabs .tab.on {
			margin-top: -1px;
		}

		.status {
			display: flex;
			align-items: center;
			flex: 1;
			padding: 4px 0 0 2px;
			border-top: 1px solid #a8a8a8;
			border-bottom: 2px solid #8aa4bc;
			font-size: 11px;
			color: #222;
		}

		.cell {
			flex: none;
			height: 15px;
			line-height: 15px;
			padding-left: 6px;
			border-right: 1px solid #a8a8a8;
		}

		.cell:first-child {
			padding-left: 0;
		}

		.conn {
			margin-left: 4px;
		}

		.kb {
			margin-left: 47px;
		}
	`;
}
